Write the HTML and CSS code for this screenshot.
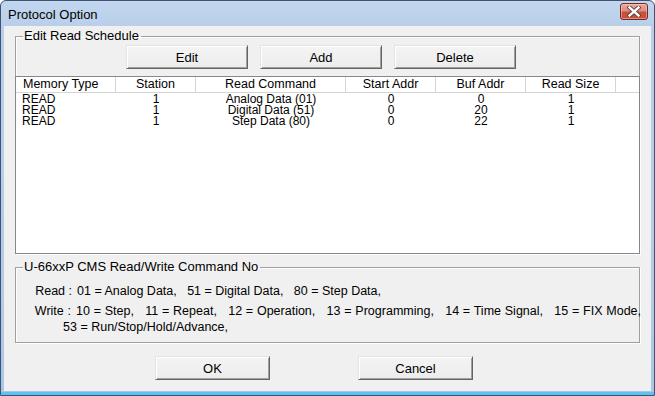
FILE: index.html
```html
<!DOCTYPE html>
<html>
<head>
<meta charset="utf-8">
<link rel="stylesheet" href="styles.css">
</head>
<body>
<div class="window">
  <div class="titlebar">
    <span class="title">Protocol Option</span>
    <button class="close" aria-label="Close">
      <svg width="14" height="11" viewBox="0 0 14 11">
        <path d="M2.5 1.5 L11.5 9.5 M11.5 1.5 L2.5 9.5" stroke="#5a3a36" stroke-width="4.2" stroke-linecap="square" fill="none"/>
        <path d="M2.5 1.5 L11.5 9.5 M11.5 1.5 L2.5 9.5" stroke="#ffffff" stroke-width="2.4" stroke-linecap="square" fill="none"/>
      </svg>
    </button>
  </div>
  <div class="client">
    <fieldset class="group schedule">
      <legend>Edit Read Schedule</legend>
      <div class="toolbar">
        <button class="btn tool">Edit</button>
        <button class="btn tool">Add</button>
        <button class="btn tool">Delete</button>
      </div>
      <div class="listview">
        <div class="lv-grid lv-header">
          <div class="cell left">Memory Type</div>
          <div class="cell">Station</div>
          <div class="cell">Read Command</div>
          <div class="cell">Start Addr</div>
          <div class="cell">Buf Addr</div>
          <div class="cell">Read Size</div>
          <div class="cell filler"></div>
        </div>
        <div class="lv-body">
          <div class="lv-grid lv-row">
            <div class="cell left">READ</div><div class="cell">1</div><div class="cell">Analog Data (01)</div><div class="cell">0</div><div class="cell">0</div><div class="cell">1</div><div class="cell"></div>
          </div>
          <div class="lv-grid lv-row">
            <div class="cell left">READ</div><div class="cell">1</div><div class="cell">Digital Data (51)</div><div class="cell">0</div><div class="cell">20</div><div class="cell">1</div><div class="cell"></div>
          </div>
          <div class="lv-grid lv-row">
            <div class="cell left">READ</div><div class="cell">1</div><div class="cell">Step Data (80)</div><div class="cell">0</div><div class="cell">22</div><div class="cell">1</div><div class="cell"></div>
          </div>
        </div>
      </div>
    </fieldset>
    <fieldset class="group commands">
      <legend>U-66xxP CMS Read/Write Command No</legend>
      <p class="cmd cmd-read"><span class="lbl">Read :</span><span class="txt">01 = Analog Data,   51 = Digital Data,   80 = Step Data,</span></p>
      <p class="cmd cmd-write"><span class="lbl">Write :</span><span class="txt">10 = Step,   11 = Repeat,   12 = Operation,   13 = Programming,   14 = Time Signal,   15 = FIX Mode,</span></p>
      <p class="cmd cmd-cont"><span class="txt">53 = Run/Stop/Hold/Advance,</span></p>
    </fieldset>
    <div class="actions">
      <button class="btn dlg">OK</button>
      <button class="btn dlg">Cancel</button>
    </div>
  </div>
</div>
</body>
</html>
```
FILE: styles.css
```css
* { box-sizing: border-box; }
html, body { margin: 0; padding: 0; }
body {
  width: 655px;
  height: 396px;
  overflow: hidden;
  font-family: "Liberation Sans", Arial, sans-serif;
  font-size: 12px;
  color: #000;
  background: #ffffff;
}
.window {
  width: 655px;
  height: 396px;
  border: 1px solid #3c5374;
  border-radius: 6px 6px 0 0;
  background: linear-gradient(to bottom, #c2d6ee 0px, #b9cfe9 26px, #b4cbe7 300px, #a8c6e8 100%);
  padding: 0 3px 4px 3px;
  display: flex;
  flex-direction: column;
  box-shadow: inset 0 -3px 0 #5cc3ee;
}
.titlebar {
  height: 25px;
  display: flex;
  align-items: center;
  padding-left: 4px;
  padding-right: 3px;
  flex: none;
}
.title {
  font-size: 13px;
  flex: 1;
  padding-top: 1px;
}
.close {
  width: 28px;
  height: 17px;
  margin-bottom: 4px;
  padding: 0;
  border: 1px solid #6e2b23;
  border-radius: 3px;
  background: linear-gradient(to bottom, #e9a99b 0%, #dc8d7e 45%, #c84f3c 55%, #c9513f 100%);
  box-shadow: inset 0 0 0 1px rgba(255,220,210,0.45);
  display: flex;
  align-items: center;
  justify-content: center;
}
.close svg { display: block; }
.client {
  flex: 1;
  background: #f0f0f0;
  padding: 3px 11px 0 11px;
  display: flex;
  flex-direction: column;
}
.group {
  margin: 0;
  padding: 0;
  border: 1px solid #a0a0a0;
  box-shadow: 1px 1px 0 #ffffff, inset 1px 1px 0 #ffffff;
  min-width: 0;
}
.group legend {
  margin-left: 7px;
  padding: 0 2px 0 1px;
  font-size: 13px;
  line-height: 14px;
  height: 14px;
}
.schedule {
  border-bottom: none;
  padding-top: 2px;
}
.toolbar {
  display: flex;
  gap: 12px;
  padding-left: 110px;
}
.btn {
  font-family: "Liberation Sans", Arial, sans-serif;
  font-size: 13px;
  color: #000;
  height: 24px;
  padding: 0;
  background: linear-gradient(to bottom, #f4f4f4, #ececec);
  border: 1px solid;
  border-color: #e3e3e3 #646464 #646464 #e3e3e3;
  box-shadow: inset 1px 1px 0 #ffffff, inset -1px -1px 0 #a0a0a0;
}
.tool { width: 122px; }
.listview {
  margin: 7px -1px 0 -1px;
  height: 178px;
  border: 1px solid #828790;
  background: #ffffff;
  display: flex;
  flex-direction: column;
}
.lv-grid {
  display: grid;
  grid-template-columns: 100px 80px 150px 90px 90px 90px 1fr;
}
.lv-header {
  height: 16px;
  line-height: 15px;
  border-bottom: 1px solid #d5d5d5;
}
.lv-header .cell {
  border-right: 1px solid #d5d5d5;
  font-size: 12.5px;
  overflow: hidden;
}
.lv-header .filler { border-right: none; }
.cell {
  text-align: center;
  white-space: nowrap;
}
.cell.left {
  text-align: left;
  padding-left: 7px;
}
.lv-body { padding-top: 1px; }
.lv-row {
  height: 11px;
  line-height: 11px;
  font-size: 12px;
}
.lv-row .cell.left { padding-left: 6px; }
.commands {
  margin-top: 6px;
  padding: 9px 0 7px 0;
}
.cmd {
  margin: 0;
  height: 16px;
  line-height: 16px;
  font-size: 12.5px;
  white-space: pre;
  display: flex;
}
.cmd-read { margin-bottom: 4px; }
.cmd-write { word-spacing: 0.3px; }
.lbl {
  width: 56px;
  text-align: right;
  flex: none;
}
.cmd-write .lbl { width: 55px; }
.txt { padding-left: 5px; }
.cmd-cont { padding-left: 42px; }
.actions {
  display: flex;
  gap: 88px;
  padding-left: 140px;
  margin-top: 13px;
}
.dlg { width: 115px; }
```
